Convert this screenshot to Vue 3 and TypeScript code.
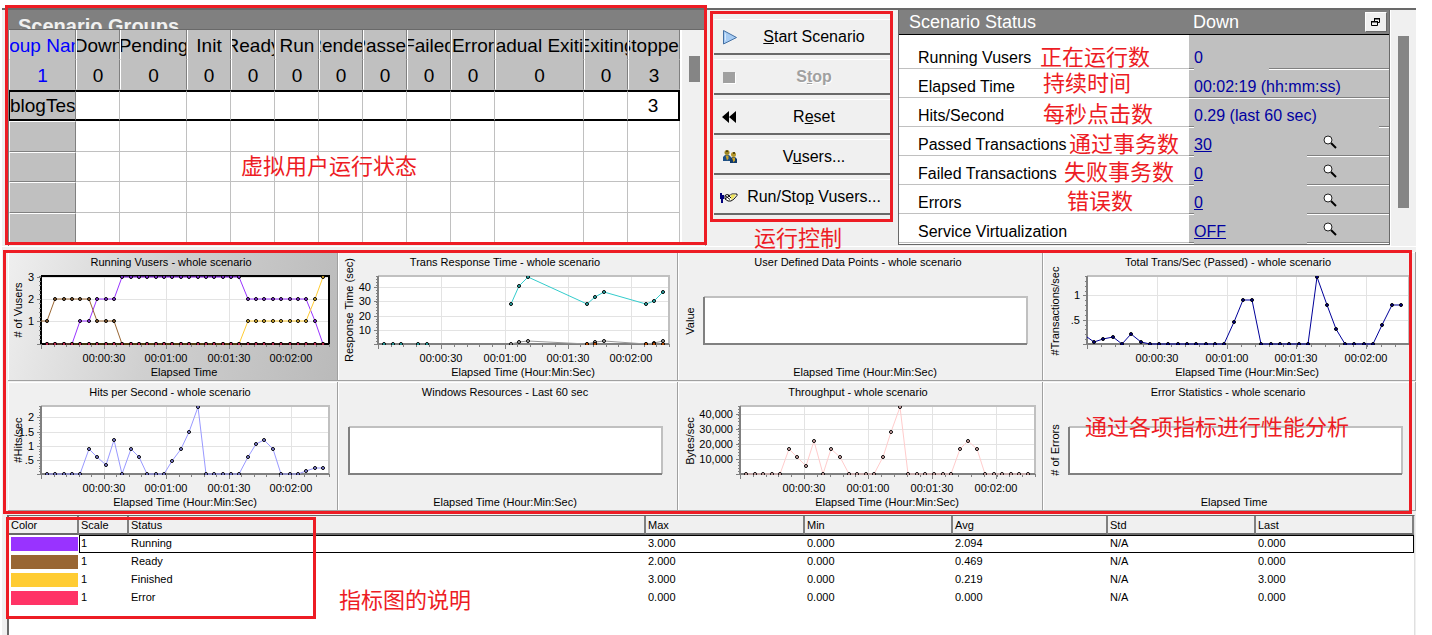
<script setup lang="ts">
interface GroupColumn { name: string; total: number; width: string }
interface StatusRow { label: string; value: string; link?: boolean; find?: boolean; cover: string }
interface Point { x: number; y: number }
interface Series { color: string; fill?: string; points: Point[]; lead?: Point; noLine?: boolean }
interface Tick { at: number; text: string }
interface Chart {
  id: string
  box: [number, number, number, number]
  title: string
  titleX: number
  xLabel: string
  xLabelX: number
  yLabel?: string
  yLabelX: number
  yLabelY: number
  plot: [number, number, number, number]
  xTicks: Tick[]
  yTicks: Tick[]
  minorX: number
  minorY: number
  series: Series[]
  active?: boolean
}

const columns: GroupColumn[] = [
  { name: 'Down', total: 0, width: 'w-s' },
  { name: 'Pending', total: 0, width: 'w-m' },
  { name: 'Init', total: 0, width: 'w-s' },
  { name: 'Ready', total: 0, width: 'w-s' },
  { name: 'Run', total: 0, width: 'w-s' },
  { name: 'Rendez', total: 0, width: 'w-s' },
  { name: 'Passed', total: 0, width: 'w-s' },
  { name: 'Failed', total: 0, width: 'w-s' },
  { name: 'Error', total: 0, width: 'w-s' },
  { name: 'Gradual Exiting', total: 0, width: 'w-l' },
  { name: 'Exiting', total: 0, width: 'w-s' },
  { name: 'Stopped', total: 3, width: 'w-auto' },
]

const statusRows: StatusRow[] = [
  { label: 'Running Vusers', value: '0', cover: 'cover-s' },
  { label: 'Elapsed Time', value: '00:02:19 (hh:mm:ss)', cover: 'cover-none' },
  { label: 'Hits/Second', value: '0.29 (last 60 sec)', cover: 'cover-l' },
  { label: 'Passed Transactions', value: '30', link: true, find: true, cover: 'cover-m' },
  { label: 'Failed Transactions', value: '0', link: true, find: true, cover: 'cover-m' },
  { label: 'Errors', value: '0', link: true, find: true, cover: 'cover-m' },
  { label: 'Service Virtualization', value: 'OFF', link: true, find: true, cover: 'cover-m' },
]

const spread = (first: number, last: number, ys: number[]): Point[] =>
  ys.map((y, i) => ({ x: Math.round(first + ((last - first) * i) / (ys.length - 1)), y }))
const rep = (n: number, v: number): number[] => Array<number>(n).fill(v)
const vusers = (vals: number[]): Point[] =>
  spread(47, 323, vals.map(v => [344, 321, 299, 277][v]))
const times = (xs: number[]): Tick[] =>
  xs.map((at, i) => ({ at, text: ['00:00:30', '00:01:00', '00:01:30', '00:02:00'][i] }))
const pairs = (xs: number[], ys: number[]): Point[] => xs.map((x, i) => ({ x, y: ys[i] }))

const elapsed = 'Elapsed Time (Hour:Min:Sec)'
const hitX = [511, 519, 528, 587, 595, 604, 646, 654, 663]

const charts: Chart[] = [
  {
    id: 'vusers', box: [8, 252, 330, 129], active: true,
    title: 'Running Vusers - whole scenario', titleX: 171,
    xLabel: 'Elapsed Time', xLabelX: 184,
    yLabel: '# of Vusers', yLabelX: 22, yLabelY: 310,
    plot: [41, 276, 288, 68],
    xTicks: times([104, 166, 229, 291]),
    yTicks: [{ at: 277, text: '3' }, { at: 299, text: '2' }, { at: 321, text: '1' }],
    minorX: 23, minorY: 15,
    series: [
      { color: '#9933ff', points: vusers([0, 0, 0, 0, 1, 1, 2, 2, 2, ...rep(15, 3), ...rep(8, 2), 1, 0]) },
      { color: '#996633', lead: { x: 41, y: 321 }, points: vusers([1, ...rep(5, 2), 1, 1, 1, ...rep(25, 0)]) },
      { color: '#ffcc33', points: vusers([...rep(24, 0), ...rep(8, 1), 2, 3]) },
      { color: '#000000', fill: '#ff3366', points: vusers(rep(34, 0)) },
    ],
  },
  {
    id: 'response', box: [338, 252, 340, 129],
    title: 'Trans Response Time - whole scenario', titleX: 505,
    xLabel: elapsed, xLabelX: 523,
    yLabel: 'Response Time (sec)', yLabelX: 353, yLabelY: 310,
    plot: [378, 276, 291, 68],
    xTicks: times([441, 505, 568, 631]),
    yTicks: [{ at: 287, text: '40' }, { at: 301, text: '30' }, { at: 316, text: '20' }, { at: 330, text: '10' }],
    minorX: 23, minorY: 24,
    series: [
      { color: '#999999', fill: '#c0c0c0', points: pairs(hitX, [344, 342, 341, 344, 342, 341, 344, 343, 341]) },
      { color: '#33cccc', noLine: true, points: pairs([384, 393, 401, 418, 427], rep(5, 344)) },
      { color: '#ff6600', points: pairs([587, 595, 646, 654, 663], rep(5, 344)), noLine: true },
      { color: '#33cccc', points: pairs(hitX, [304, 286, 277, 304, 297, 292, 304, 301, 292]) },
    ],
  },
  {
    id: 'user', box: [678, 252, 365, 129],
    title: 'User Defined Data Points - whole scenario', titleX: 858,
    xLabel: elapsed, xLabelX: 865,
    yLabel: 'Value', yLabelX: 694, yLabelY: 321,
    plot: [704, 297, 323, 47],
    xTicks: [], yTicks: [], minorX: 0, minorY: 0, series: [],
  },
  {
    id: 'trans', box: [1043, 252, 373, 129],
    title: 'Total Trans/Sec (Passed) - whole scenario', titleX: 1228,
    xLabel: elapsed, xLabelX: 1247,
    yLabel: '#Transactions/sec', yLabelX: 1059, yLabelY: 311,
    plot: [1087, 276, 322, 68],
    xTicks: times([1157, 1227, 1296, 1366]),
    yTicks: [{ at: 295, text: '1' }, { at: 320, text: '.5' }],
    minorX: 23, minorY: 14,
    series: [
      {
        color: '#000099', lead: { x: 1087, y: 337 },
        points: spread(1094, 1401, [342, 339, 337, 344, 334, 342, ...rep(9, 344), 322, 300, 300,
          ...rep(6, 344), 277, 305, 329, ...rep(4, 344), 325, 305, 305]),
      },
    ],
  },
  {
    id: 'hits', box: [8, 382, 330, 129],
    title: 'Hits per Second - whole scenario', titleX: 170,
    xLabel: elapsed, xLabelX: 185,
    yLabel: '#Hits/sec', yLabelX: 22, yLabelY: 440,
    plot: [41, 406, 288, 68],
    xTicks: times([104, 166, 229, 291]),
    yTicks: [{ at: 417, text: '2' }, { at: 432, text: '1.5' }, { at: 446, text: '1' }, { at: 460, text: '.5' }],
    minorX: 23, minorY: 24,
    series: [
      {
        color: '#9999ff',
        points: spread(47, 323, [...rep(5, 474), 449, 457, 465, 440, 474, 449, 457, ...rep(3, 474), 461, 449, 432,
          407, ...rep(5, 474), 457, 444, 440, 449, ...rep(3, 474), 471, 468, 468]),
      },
    ],
  },
  {
    id: 'windows', box: [338, 382, 340, 129],
    title: 'Windows Resources - Last 60 sec', titleX: 505,
    xLabel: elapsed, xLabelX: 505,
    yLabelX: 353, yLabelY: 450,
    plot: [349, 427, 313, 47],
    xTicks: [], yTicks: [], minorX: 0, minorY: 0, series: [],
  },
  {
    id: 'throughput', box: [678, 382, 365, 129],
    title: 'Throughput - whole scenario', titleX: 858,
    xLabel: elapsed, xLabelX: 887,
    yLabel: 'Bytes/sec', yLabelX: 694, yLabelY: 441,
    plot: [740, 406, 295, 68],
    xTicks: times([804, 868, 932, 996]),
    yTicks: [{ at: 414, text: '40,000' }, { at: 429, text: '30,000' }, { at: 444, text: '20,000' }, { at: 459, text: '10,000' }],
    minorX: 23, minorY: 22,
    series: [
      {
        color: '#ffcccc',
        points: spread(746, 1028, [...rep(5, 474), 449, 457, 466, 441, 474, 449, 457, ...rep(4, 474), 457, 432,
          407, ...rep(6, 474), 449, 441, 449, ...rep(6, 474)]),
      },
    ],
  },
  {
    id: 'errors', box: [1043, 382, 373, 129],
    title: 'Error Statistics - whole scenario', titleX: 1228,
    xLabel: 'Elapsed Time', xLabelX: 1234,
    yLabel: '# of Errors', yLabelX: 1059, yLabelY: 450,
    plot: [1069, 427, 333, 47],
    xTicks: [], yTicks: [], minorX: 0, minorY: 0, series: [],
  },
]

const line = (s: Series): string =>
  [...(s.lead ? [s.lead] : []), ...s.points].map(p => `${p.x},${p.y}`).join(' ')

const legend = [
  { tone: 'purple', status: 'Running', max: '3.000', avg: '2.094', last: '0.000' },
  { tone: 'brown', status: 'Ready', max: '2.000', avg: '0.469', last: '0.000' },
  { tone: 'yellow', status: 'Finished', max: '3.000', avg: '0.219', last: '3.000' },
  { tone: 'pink', status: 'Error', max: '0.000', avg: '0.000', last: '0.000' },
]
</script>

<template>
  <main class="app">
    <section class="top">
      <div class="groups">
        <h2 class="groups-title">Scenario Groups</h2>
        <div class="groups-body">
          <table class="grid">
            <colgroup>
              <col class="w-m">
              <col v-for="c in columns" :key="c.name" :class="c.width">
            </colgroup>
            <thead>
              <tr>
                <th class="name"><div>Group Name</div></th>
                <th v-for="c in columns" :key="c.name"><div>{{ c.name }}</div></th>
              </tr>
              <tr>
                <th class="name"><div>1</div></th>
                <th v-for="c in columns" :key="c.name"><div>{{ c.total }}</div></th>
              </tr>
            </thead>
            <tbody>
              <tr class="selected">
                <th scope="row"><div class="start">blogTest</div></th>
                <td v-for="(c, i) in columns" :key="c.name"><div>{{ i === columns.length - 1 ? 3 : '' }}</div></td>
              </tr>
              <tr v-for="n in 4" :key="n">
                <th scope="row"></th>
                <td v-for="c in columns" :key="c.name"></td>
              </tr>
            </tbody>
          </table>
          <div class="scroll"><div class="thumb short"></div></div>
        </div>
        <div class="frame"></div>
        <span class="note note-groups">虚拟用户运行状态</span>
      </div>

      <div class="controls">
        <div class="buttons">
          <button type="button">
            <svg width="16" height="16" viewBox="0 0 16 16"><path d="M1.500 1.500L14.500 8.500 1.500 15z" fill="#a6cbf3" stroke="#4470a4" stroke-linejoin="round" /><path d="M3.500 4.500v7" stroke="#d5e8fb" /></svg>
            <span><u>S</u>tart Scenario</span>
          </button>
          <button type="button" class="off" disabled>
            <svg width="16" height="16" viewBox="0 0 16 16"><path d="M2 4h12v11H2z" fill="#fff" /><path d="M1 3h12v11H1z" fill="#a0a0a0" /></svg>
            <span>S<u>t</u>op</span>
          </button>
          <button type="button">
            <svg width="16" height="16" viewBox="0 0 16 16"><path d="M7 2v12L0 8zM14 2v12L7 8z" /></svg>
            <span>R<u>e</u>set</span>
          </button>
          <button type="button">
            <svg width="16" height="16" viewBox="0 0 16 16">
              <path d="M1 12V8l2-2h4l2 2v4z" fill="#1c4f86" /><path d="M3.500 6.500h3v3l-1.500 2z" fill="#c9a227" />
              <circle cx="5" cy="3.500" r="2.500" fill="#9c8420" /><path d="M4 1.500h2V3H4z" fill="#4a3c10" />
              <path d="M8 14v-4l2-2h3l2 2v4z" fill="#123a6b" /><path d="M10 8.500h3v3l-1.500 2z" fill="#c9a227" />
              <circle cx="11.500" cy="5.500" r="2.500" fill="#b39528" /><path d="M11 3h2v2h-2z" fill="#5a4a12" />
            </svg>
            <span>V<u>u</u>sers...</span>
          </button>
          <button type="button">
            <svg class="wide" width="18" height="16" viewBox="0 0 18 16">
              <path d="M0 4h2v2h2v4H3v4H1v-4H0z" fill="#00007c" />
              <path d="M5 6.500l2-1 3 1 1.500-1.500H17v1.500L14 10l-3 2H8L5 10z" fill="#fff" stroke="#111" />
              <path d="M10.500 6.500L12 5.500h4L13.500 9 11 11z" fill="#efe35a" />
              <path d="M5 6.500l5 4M8 6l3 3M5 10l4-3" stroke="#111" />
            </svg>
            <span>Run/Sto<u>p</u> Vusers...</span>
          </button>
        </div>
        <div class="frame"></div>
        <span class="note note-controls">运行控制</span>
      </div>

      <div class="status">
        <header class="status-head">
          <h2>Scenario Status</h2>
          <strong>Down</strong>
          <button type="button" aria-label="Restore">
            <svg width="12" height="12" viewBox="0 0 12 12"><path d="M4.500 6V2.500h5v4H8M1.500 5.500h6v4h-6z" fill="none" stroke="#000" /><path d="M4 2h6v1.500H4zM1 5h7v1.500H1z" /></svg>
          </button>
        </header>
        <table class="facts">
          <tbody>
            <tr v-for="r in statusRows" :key="r.label">
              <th scope="row">{{ r.label }}</th>
              <td :class="r.cover">
                <div>
                  <a v-if="r.link" href="#">{{ r.value }}</a>
                  <span v-else>{{ r.value }}</span>
                  <svg v-if="r.find" class="lens" width="14" height="14" viewBox="0 0 14 14">
                    <path d="M8 8l5 5" stroke="#000" stroke-width="2" /><circle cx="5" cy="5" r="4" fill="#fff" stroke="#222" />
                  </svg>
                </div>
              </td>
            </tr>
          </tbody>
        </table>
        <span class="note note-1">正在运行数</span>
        <span class="note note-2">持续时间</span>
        <span class="note note-3">每秒点击数</span>
        <span class="note note-4">通过事务数</span>
        <span class="note note-5">失败事务数</span>
        <span class="note note-6">错误数</span>
      </div>
      <div class="scroll outer"><div class="thumb tall"></div></div>
    </section>

    <section class="charts">
      <figure v-for="c in charts" :key="c.id" :class="{ active: c.active }">
        <svg :viewBox="c.box.join(' ')" role="img" :aria-label="c.title">
          <defs>
            <clipPath :id="'clip-' + c.id">
              <rect :x="c.plot[0]" :y="c.plot[1]" :width="c.plot[2]" :height="c.plot[3] + 1" />
            </clipPath>
          </defs>
          <rect class="plot" :x="c.plot[0]" :y="c.plot[1]" :width="c.plot[2]" :height="c.plot[3]" />
          <g class="lines">
            <path v-for="t in c.xTicks" :key="t.at" :d="`M${t.at} ${c.plot[1]}v${c.plot[3]}`" />
            <path v-for="t in c.yTicks" :key="t.at" :d="`M${c.plot[0]} ${t.at}h${c.plot[2]}`" />
          </g>
          <path class="edge-light" :d="`M${c.plot[0]} ${c.plot[1]}h${c.plot[2]}v${c.plot[3]}`" />
          <path class="edge-dark" :d="`M${c.plot[0]} ${c.plot[1]}v${c.plot[3]}h${c.plot[2]}`" />
          <g v-if="c.series.length" class="ticks">
            <path v-for="n in c.minorX + 1" :key="'x' + n"
              :d="`M${Math.round(c.plot[0] + ((n - 1) * c.plot[2]) / c.minorX)} ${c.plot[1] + c.plot[3]}v3`" />
            <path v-for="t in c.xTicks" :key="'X' + t.at" :d="`M${t.at} ${c.plot[1] + c.plot[3]}v5`" />
            <path v-for="n in c.minorY + 1" :key="'y' + n"
              :d="`M${c.plot[0]} ${Math.round(c.plot[1] + ((n - 1) * c.plot[3]) / c.minorY)}h-2`" />
            <path v-for="t in c.yTicks" :key="'Y' + t.at" :d="`M${c.plot[0]} ${t.at}h-4`" />
            <path :d="`M${c.plot[0]} ${c.plot[1] + c.plot[3]}h-4m4 0v5`" />
          </g>
          <g :clip-path="`url(#clip-${c.id})`">
            <template v-for="(s, i) in c.series" :key="i">
              <polyline v-if="!s.noLine" class="trace" :points="line(s)" :stroke="s.color" />
              <circle v-for="p in s.points" :key="p.x" class="dot" :cx="p.x" :cy="p.y" r="1.500" :fill="s.fill || s.color" />
            </template>
          </g>
          <text class="mid" :x="c.titleX" :y="c.box[1] + 14">{{ c.title }}</text>
          <text v-for="t in c.xTicks" :key="t.text" class="mid" :x="t.at" :y="c.box[1] + 110">{{ t.text }}</text>
          <text v-for="t in c.yTicks" :key="t.text" class="end" :x="c.plot[0] - 7" :y="t.at + 4">{{ t.text }}</text>
          <text class="mid" :x="c.xLabelX" :y="c.box[1] + 124">{{ c.xLabel }}</text>
          <text v-if="c.yLabel" class="mid" :transform="`translate(${c.yLabelX} ${c.yLabelY}) rotate(-90)`">{{ c.yLabel }}</text>
        </svg>
      </figure>
      <div class="frame"></div>
      <span class="note note-charts">通过各项指标进行性能分析</span>
    </section>

    <section class="legend">
      <table>
        <colgroup>
          <col class="l-color"><col class="l-scale"><col class="l-status"><col class="l-max">
          <col class="l-min"><col class="l-avg"><col class="l-min"><col class="l-last">
        </colgroup>
        <thead>
          <tr>
            <th>Color</th><th>Scale</th><th>Status</th><th>Max</th><th>Min</th><th>Avg</th><th>Std</th><th>Last</th>
          </tr>
        </thead>
        <tbody>
          <tr v-for="(r, i) in legend" :key="r.status" :class="{ picked: i === 0 }">
            <td class="swatch"><div :class="r.tone"></div></td>
            <td>1</td><td>{{ r.status }}</td><td>{{ r.max }}</td><td>0.000</td><td>{{ r.avg }}</td><td>N/A</td><td>{{ r.last }}</td>
          </tr>
        </tbody>
      </table>
      <div class="frame"></div>
      <span class="note note-legend">指标图的说明</span>
    </section>
  </main>
</template>

<style>
html,
body {
  margin: 0;
  background: #fff;
}
</style>

<style scoped>
.app,
.app * {
  box-sizing: border-box;
}

.app {
  margin: 8px 16px 0 2px;
  min-height: calc(100vh - 8px);
  background: #f0f0f0;
  color: #000;
  font-family: "Liberation Sans", Arial, "Noto Sans CJK SC", sans-serif;
  display: flex;
  flex-direction: column;
}

h2 {
  margin: 0;
  font-weight: 400;
}

table {
  border-collapse: separate;
  border-spacing: 0;
  table-layout: fixed;
  width: 100%;
}

th,
td {
  padding: 0;
  font-weight: 400;
  text-align: left;
}

.frame {
  position: absolute;
  border: 3px solid #ed1c24;
  pointer-events: none;
}

.note {
  position: absolute;
  color: #ed1c24;
  font-family: "Noto Sans CJK SC", sans-serif;
  font-size: 22px;
  line-height: 24px;
  white-space: nowrap;
}

/* top row */
.top {
  display: flex;
  height: 239px;
  border-top: 2px solid #696969;
  border-bottom: 1px solid #fff;
  padding-left: 6px;
}

.groups {
  position: relative;
  flex: 1;
  min-width: 0;
  border-left: 1px solid #808080;
}

.groups .frame {
  inset: -5px -2px 1px -4px;
  z-index: 1;
}

.groups-title {
  height: 20px;
  padding: 4px 9px 0;
  overflow: hidden;
  background: #808080;
  border-bottom: 1px solid #696969;
  color: #f0f0f0;
  font-size: 20px;
  line-height: 24px;
  font-weight: 700;
}

.groups-body {
  display: flex;
  height: 213px;
  overflow: hidden;
  background: #f0f0f0;
}

.grid {
  flex: 1;
  min-width: 0;
  background: #fff;
  font-size: 19px;
}

.w-s {
  width: 44px;
}

.w-m {
  width: 67px;
}

.w-l {
  width: 89px;
}

.grid th,
.grid td {
  height: 30px;
  border-right: 1px solid #c0c0c0;
  border-bottom: 1px solid #c0c0c0;
}

.grid th {
  background: #c0c0c0;
  border-right-color: #808080;
  border-left: 1px solid #fff;
}

.grid thead th {
  border-bottom-color: #c0c0c0;
}

.grid thead div {
  padding-top: 2px;
}

.grid tbody th {
  border-bottom-color: #808080;
  border-top: 1px solid #fff;
}

.grid div {
  display: flex;
  justify-content: center;
  overflow: hidden;
  white-space: nowrap;
  line-height: 26px;
}

.grid div.start {
  justify-content: flex-start;
}

.grid .name {
  color: #00f;
}

.grid .selected th,
.grid .selected td {
  height: 31px;
  border-top: 2px solid #000;
  border-bottom: 2px solid #000;
}

.grid .selected th {
  border-left-color: #000;
}

.grid .selected td:last-child {
  border-right: 2px solid #000;
}

.scroll {
  flex: none;
  width: 25px;
  padding-left: 7px;
  border-left: 2px solid #fff;
}

.thumb {
  width: 11px;
  background: #858585;
}

.short {
  height: 26px;
  margin-top: 26px;
}

.tall {
  height: 172px;
  margin-top: 26px;
}

.outer {
  width: 26px;
  padding-left: 7px;
  border-left: 1px solid #fff;
}

.note-groups {
  left: 232px;
  top: 142px;
}

.controls {
  position: relative;
  flex: none;
  width: 193px;
  padding: 9px 8px 0 8px;
  border-left: 1px solid #a0a0a0;
}

.controls .frame {
  inset: 1px 5px 24px 4px;
}

.buttons {
  display: flex;
  flex-direction: column;
  gap: 4px;
}

.buttons button {
  display: flex;
  align-items: center;
  height: 36px;
  padding: 0 0 0 8px;
  border: 0;
  border-top: 1px solid #fff;
  border-bottom: 2px solid #696969;
  background: #f0f0f0;
  color: #000;
  font-family: inherit;
  font-size: 16px;
  line-height: 20px;
}

.buttons .wide {
  margin-left: -2px;
}

.buttons span {
  flex: 1;
  text-align: center;
  white-space: nowrap;
}

.buttons .off {
  color: #a0a0a0;
  font-weight: 700;
  text-shadow: 1px 1px 0 #fff;
}

.note-controls {
  left: 48px;
  top: 214px;
}

.status {
  position: relative;
  flex: none;
  width: 492px;
  height: 235px;
  border: solid #696969;
  border-width: 0 1px 1px;
}

.status-head {
  display: flex;
  align-items: center;
  height: 25px;
  padding: 0 2px 0 10px;
  background: #808080;
  border-bottom: 1px solid #000;
  color: #fff;
  font-size: 18px;
  line-height: 24px;
}

.status-head h2 {
  width: 284px;
  font-size: 18px;
}

.status-head strong {
  flex: 1;
  font-weight: 400;
}

.status-head button {
  display: grid;
  place-items: center;
  width: 22px;
  height: 20px;
  padding: 0;
  background: #f0f0f0;
  border: 1px solid #fff;
  border-right-color: #696969;
  border-bottom-color: #696969;
}

.facts {
  font-size: 16px;
  line-height: 20px;
}

.facts th,
.facts td {
  height: 29px;
  vertical-align: bottom;
}

.facts th {
  padding: 0 0 2px 19px;
  background: linear-gradient(#c0c0c0, #c0c0c0) 0 calc(100% - 1px) / 100% 1px no-repeat, #fff;
}

.facts td {
  width: 200px;
  padding: 0 0 2px 5px;
  color: #0000a0;
  background:
    linear-gradient(#c0c0c0, #c0c0c0) 5px 100% / var(--cover) 2px no-repeat,
    linear-gradient(#808080 50%, #fff 50%) 0 100% / 100% 2px no-repeat,
    #c0c0c0;
}

.facts tr:first-child th,
.facts tr:first-child td {
  height: 35px;
}

.facts div {
  display: flex;
  align-items: flex-start;
}

.facts a {
  color: #0000a0;
}

.lens {
  margin: 0 52px 0 auto;
}

.cover-none {
  --cover: 0px;
}

.cover-s {
  --cover: 75px;
}

.cover-m {
  --cover: 113px;
}

.cover-l {
  --cover: 185px;
}

.note-1 {
  left: 141px;
  top: 33px;
}

.note-2 {
  left: 144px;
  top: 59px;
}

.note-3 {
  left: 144px;
  top: 90px;
}

.note-4 {
  left: 170px;
  top: 120px;
}

.note-5 {
  left: 165px;
  top: 148px;
}

.note-6 {
  left: 168px;
  top: 177px;
}

/* charts */
.charts {
  position: relative;
  display: grid;
  grid-template-columns: 330fr 340fr 365fr 373fr;
  row-gap: 1px;
  margin-top: 5px;
  padding-left: 6px;
}

.charts .frame {
  inset: -2px 4px -3px 1px;
}

figure {
  margin: 0;
  min-width: 0;
  box-shadow: inset -1px -1px #a0a0a0, inset 1px 1px #fff;
}

figure.active {
  background: linear-gradient(105deg, #efefef, #d0d0d0 45%, #bababa);
}

figure svg {
  display: block;
  width: 100%;
  height: auto;
}

figure text {
  font-size: 11px;
  fill: #000;
}

.mid {
  text-anchor: middle;
}

.end {
  text-anchor: end;
}

.plot {
  fill: #fff;
}

.lines path {
  stroke: #e3e3e3;
  fill: none;
  shape-rendering: crispEdges;
}

.edge-light,
.edge-dark {
  fill: none;
  stroke: #c0c0c0;
  stroke-width: 2px;
  shape-rendering: crispEdges;
}

.edge-dark {
  stroke: #808080;
}

.active .edge-light,
.active .edge-dark {
  stroke: #000;
}

.ticks path {
  fill: none;
  stroke: #808080;
  shape-rendering: crispEdges;
}

.trace {
  fill: none;
}

.dot {
  stroke: #000;
}

.note-charts {
  left: 1083px;
  top: 161px;
}

/* legend */
.legend {
  position: relative;
  flex: 1;
  margin: 4px 1px 0 5px;
  border-left: 2px solid #696969;
  border-top: 1px solid #696969;
  border-right: 1px solid #e0e0e0;
  background: #fff;
  font-size: 11px;
}

.legend .frame {
  left: -3px;
  top: 1px;
  width: 310px;
  height: 102px;
}

.legend th {
  height: 19px;
  padding: 0 2px;
  background: #f0f0f0;
  border-right: 2px solid #808080;
  border-bottom: 2px solid #696969;
  line-height: 16px;
}

.legend td {
  height: 18px;
  padding: 0 2px 2px;
  line-height: 14px;
}

.legend .swatch {
  padding: 0 1px 0 2px;
}

.swatch div {
  height: 14px;
}

.purple {
  background: #9933ff;
}

.brown {
  background: #996633;
}

.yellow {
  background: #ffcc33;
}

.pink {
  background: #ff3366;
}

.picked td:not(.swatch) {
  border-top: 1px solid #000;
  border-bottom: 1px solid #000;
}

.picked td:nth-child(2) {
  border-left: 1px solid #000;
  padding-left: 1px;
}

.picked td:last-child {
  border-right: 1px solid #000;
}

.l-color {
  width: 70px;
}

.l-scale {
  width: 50px;
}

.l-max {
  width: 159px;
}

.l-min {
  width: 148px;
}

.l-avg {
  width: 155px;
}

.l-last {
  width: 158px;
}

.note-legend {
  left: 330px;
  top: 70px;
}
</style>
